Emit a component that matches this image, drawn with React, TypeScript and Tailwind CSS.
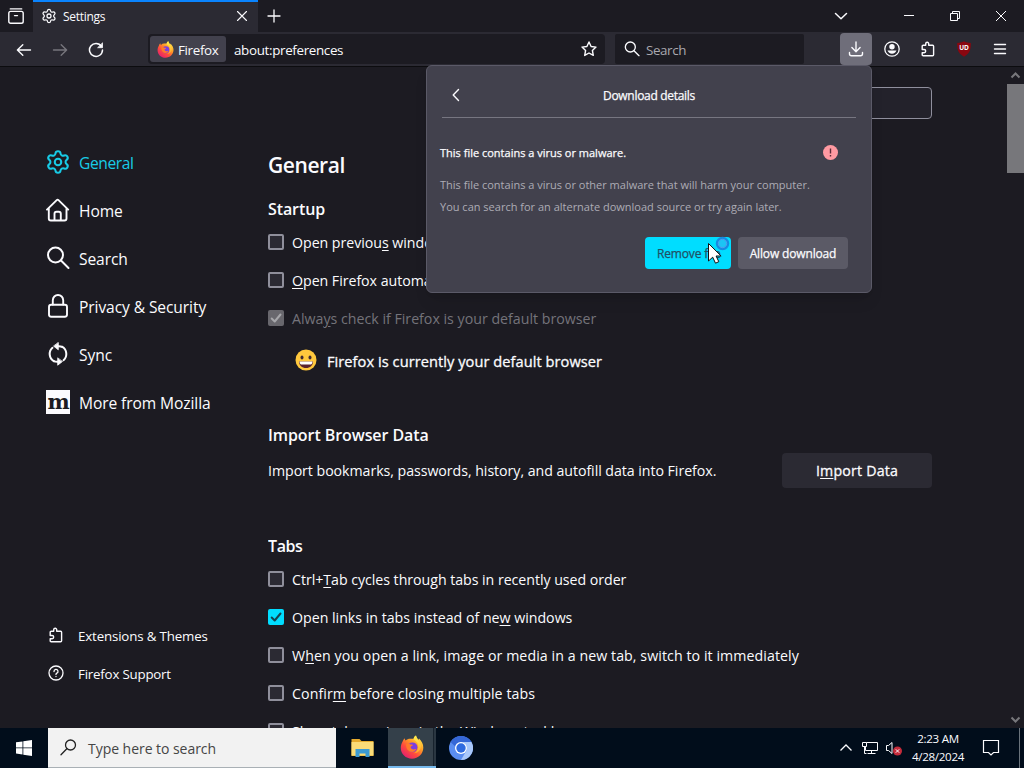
import type { ReactNode } from "react";
import { Settings } from "lucide-react";

type IconProps = { className?: string };

const stroke = {
  fill: "none",
  stroke: "currentColor",
  strokeWidth: 1.3,
  strokeLinecap: "round",
  strokeLinejoin: "round",
} as const;

function FirefoxLogo({ className }: IconProps) {
  return (
    <svg viewBox="0 0 24 24" className={className}>
      <defs>
        <linearGradient id="fx-body" x1="0.85" y1="0.1" x2="0.2" y2="0.95">
          <stop offset="0" stopColor="#ffe347" />
          <stop offset="0.35" stopColor="#ff9a25" />
          <stop offset="0.65" stopColor="#ff4b3c" />
          <stop offset="1" stopColor="#e4206f" />
        </linearGradient>
        <linearGradient id="fx-flame" x1="0.5" y1="0" x2="0.5" y2="1">
          <stop offset="0" stopColor="#fff14f" />
          <stop offset="1" stopColor="#ffa52c" />
        </linearGradient>
      </defs>
      <path
        d="M2.6 6.6C3 5.4 3.7 4.3 4.7 3.3c.1 1 .4 1.6.9 2.2C7 4.2 8.6 3.6 10.5 3.7c1-.1 2-.1 3 .2C13.7 2.4 14.6 1.1 16 .4c.4 2 1.4 3 2.8 4.4l.2-1.2c2.6 2.4 4.4 5.6 4.3 9.2C23.2 18.9 18.3 23.7 12 23.7S.8 19 .8 13c0-2.4.7-4.6 1.8-6.4z"
        fill="url(#fx-body)"
      />
      <path
        d="M16 .4c-1.6.9-2.5 2.5-2.4 4.2 2.8 1.4 4.9 4.2 4.6 7.7-.2 3-2.2 5.2-4.6 6 4.4-.2 7.4-3.2 7.4-7.3 0-4.4-4.3-6.6-5-10.6z"
        fill="url(#fx-flame)"
      />
      <circle cx="12.5" cy="12.3" r="4.9" fill="#7a3fe0" />
      <path
        d="M6.2 9.2c1.5-1 3-.6 4.3.3 1 .1 2.3 0 2.3.6-.2 1.2-1.9 1.1-2.2 2 .2 2.4 3 3 5.6 1.7-.6 2.5-3.2 3.6-5.5 3-3-.7-5-4-4.5-7.6z"
        fill="#ff7a2a"
      />
    </svg>
  );
}

function ChromiumLogo({ className }: IconProps) {
  return (
    <svg viewBox="0 0 24 24" className={className}>
      <circle cx="12" cy="12" r="12" fill="#5a8df0" />
      <path d="M1.6 6A12 12 0 0 1 22.4 6H12a6 6 0 0 0-5.8 4.5z" fill="#3567d6" />
      <path d="M12 6h10.4A12 12 0 0 1 12 24l5.2-9A6 6 0 0 0 12 6z" fill="#a9c8fb" />
      <circle cx="12" cy="12" r="6" fill="#fff" />
      <circle cx="12" cy="12" r="4.7" fill="#2f6be0" />
    </svg>
  );
}

function ExplorerIcon({ className }: IconProps) {
  return (
    <svg viewBox="0 0 22 20" className={className}>
      <path d="M0 1h8l2 2h12v15H0z" fill="#e6ab2e" />
      <path d="M0 4h22v13.5H0z" fill="#fbdc78" />
      <path d="M4 19v-8h14v8h-4v-3.5H8V19z" fill="#3d9bd3" />
    </svg>
  );
}

function PuzzleIcon({ className }: IconProps) {
  return (
    <svg viewBox="0 0 16 16" className={className} {...stroke} strokeWidth={1.4}>
      <path d="M2.2 5.3c0-.6.4-1 1-1h2.5V2.7a1.5 1.5 0 0 1 3 0v1.6h3.9c.6 0 1 .4 1 1v8.4c0 .6-.4 1-1 1H3.2c-.6 0-1-.4-1-1v-2h1.9a1.6 1.6 0 0 0 0-3.2H2.2z" />
    </svg>
  );
}

function SearchIcon({ className }: IconProps) {
  return (
    <svg viewBox="0 0 24 24" className={className} {...stroke} strokeWidth={2}>
      <circle cx="9.5" cy="9" r="7.5" />
      <path d="M15 14.5l7.5 7.5" />
    </svg>
  );
}

function HomeIcon({ className }: IconProps) {
  return (
    <svg viewBox="0 0 24 24" className={className} {...stroke} strokeWidth={1.9}>
      <path d="M1 11.6L10.7 2.1a1.3 1.3 0 0 1 1.8 0L22.2 11.6M2.8 10v10.5a2 2 0 0 0 2 2h13.7a2 2 0 0 0 2-2V10M8.5 22.3v-6.5a2 2 0 0 1 2-2h2.3a2 2 0 0 1 2 2v6.5" />
    </svg>
  );
}

function LockIcon({ className }: IconProps) {
  return (
    <svg viewBox="0 0 24 24" className={className} {...stroke} strokeWidth={1.9}>
      <rect x="3" y="10.8" width="18" height="12" rx="2.2" />
      <path d="M6.8 10.5V6.2a5.2 5.2 0 0 1 10.4 0v4.3" />
    </svg>
  );
}

function SyncIcon({ className }: IconProps) {
  return (
    <svg viewBox="0 0 24 24" className={className} {...stroke} strokeWidth={2}>
      <path d="M8 19.3A8.3 8.3 0 0 1 6.5 5.8M16 4.7a8.3 8.3 0 0 1 1.5 13.5" />
      <path d="M12.3.8v7L7.8 4.3zM11.7 16.2v7l4.5-3.5z" fill="currentColor" strokeWidth={0.8} />
      <path d="M12 4.2c1.5-.1 2.8 0 4 .6M12 19.8c-1.5.1-2.8 0-4-.6" />
    </svg>
  );
}

function MozillaIcon() {
  return (
    <span className="flex size-6 items-center justify-center bg-[#fbfbfe] font-['DejaVu_Serif',serif] text-[21px] leading-6 font-bold tracking-[-1px] text-[#1c1b22]">
      <span className="-mt-px">m</span>
    </span>
  );
}

function Key({ children }: { children: ReactNode }) {
  return <span className="underline decoration-1 underline-offset-2">{children}</span>;
}

function Tick({ className }: IconProps) {
  return (
    <svg viewBox="0 0 16 16" className={className} {...stroke} strokeWidth={2}>
      <path d="M3.7 8.5l3 3 5.8-7" />
    </svg>
  );
}

function CheckRow({
  state = "off",
  className = "",
  children,
}: {
  state?: "off" | "on" | "locked";
  className?: string;
  children: ReactNode;
}) {
  return (
    <div className={`flex h-[38px] shrink-0 items-center gap-2 ${className}`}>
      {state === "off" && (
        <span className="size-4 rounded-xs border-2 border-[#8f8f9b] bg-[#2b2a33]" />
      )}
      {state === "on" && (
        <span className="size-4 rounded-xs bg-[#00ddff]">
          <Tick className="size-4 text-[#14414f]" />
        </span>
      )}
      {state === "locked" && (
        <span className="size-4 rounded-xs bg-[#68676d]">
          <Tick className="size-4 text-[#a6a6aa]" />
        </span>
      )}
      <span className={state === "locked" ? "pt-px text-[#74737a]" : "pt-px"}>{children}</span>
    </div>
  );
}

function TabStrip() {
  return (
    <div className="flex h-8 shrink-0 bg-[#1c1b22]">
      <div className="flex w-8 items-center justify-center">
        <svg viewBox="0 0 16 16" className="size-4" {...stroke} strokeWidth={1.4}>
          <path d="M2.3.9h11.4" />
          <rect x=".8" y="3.4" width="14.4" height="11.8" rx="1.8" />
          <path d="M6.5 7.6h3" />
        </svg>
      </div>
      <div className="ml-px flex w-[225px] items-center border-t-2 border-[#0a84ff] bg-[#2b2a33] pr-2.5 pl-2">
        <Settings className="-mt-0.5 size-4" strokeWidth={1.9} />
        <span className="ml-1.5 flex-1 text-[12px] tracking-[-0.3px]">Settings</span>
        <svg viewBox="0 0 12 12" className="-mt-0.5 size-3" {...stroke} strokeWidth={1.1}>
          <path d="M1.5 1.5l9 9M10.5 1.5l-9 9" />
        </svg>
      </div>
      <div className="flex w-8 items-center justify-center">
        <svg viewBox="0 0 14 14" className="size-3.5" {...stroke}>
          <path d="M7 1v12M1 7h12" />
        </svg>
      </div>
      <div className="flex flex-1 items-center justify-end">
        <svg viewBox="0 0 14 14" className="mr-[55px] size-3.5" {...stroke} strokeWidth={1.5}>
          <path d="M1.5 4.5L7 9.7l5.5-5.2" />
        </svg>
        <svg viewBox="0 0 12 12" className="mr-[34px] size-3" fill="none" stroke="currentColor">
          <path d="M1 5.5h10" />
        </svg>
        <svg viewBox="0 0 12 12" className="mr-[34px] size-3" fill="none" stroke="currentColor">
          <path d="M1.5 3.5h7v7h-7zM3.5 3.5v-2h7v7h-2" />
        </svg>
        <svg viewBox="0 0 12 12" className="mr-[17px] size-3" fill="none" stroke="currentColor">
          <path d="M1 1l10 10M11 1L1 11" />
        </svg>
      </div>
    </div>
  );
}

function Toolbar() {
  return (
    <div className="flex h-[35px] shrink-0 items-center border-b border-[#0c0c0f] bg-[#2b2a33] text-[13.4px]">
      <svg viewBox="0 0 16 16" className="mt-px ml-4 size-4" {...stroke} strokeWidth={1.4}>
        <path d="M14.5 8h-13M6.8 2.7L1.4 8l5.4 5.3" />
      </svg>
      <svg viewBox="0 0 16 16" className="mt-px ml-5 size-4 text-[#77767d]" {...stroke} strokeWidth={1.4}>
        <path d="M1.5 8h13M9.2 2.7L14.6 8l-5.4 5.3" />
      </svg>
      <svg viewBox="0 0 16 16" className="mt-px ml-5 size-4" {...stroke} strokeWidth={1.5}>
        <path d="M13.4 4.3A6.5 6.5 0 1 0 14.5 8" />
        <path d="M14.5 1.2v4.5H10z" fill="currentColor" strokeWidth={0.8} />
      </svg>
      <div className="ml-11 flex h-[30px] w-[457px] items-center rounded-sm bg-[#1c1b22] pr-2 pl-0.5">
        <div className="flex h-[26px] w-[76px] items-center rounded-[3px] bg-[#42414d] pl-[7px]">
          <FirefoxLogo className="size-[17px]" />
          <span className="ml-1 pt-0.5 tracking-[-0.35px]">Firefox</span>
        </div>
        <span className="ml-2 flex-1 pt-0.5 tracking-[-0.34px]">about:preferences</span>
        <svg viewBox="0 0 16 16" className="size-4" {...stroke} strokeWidth={1.4}>
          <path d="M8 1l2.1 4.5 4.9.6-3.6 3.4.9 4.9L8 12l-4.3 2.4.9-4.9L1 6.1l4.900-.6z" />
        </svg>
      </div>
      <div className="ml-2.5 flex h-[30px] w-[189px] items-center rounded-xs bg-[#1c1b22] pl-[9px]">
        <SearchIcon className="size-4" />
        <span className="ml-1.5 pt-0.5 tracking-[-0.4px] text-[#a9a8af]">Search</span>
      </div>
      <div className="ml-9 flex size-8 items-center justify-center rounded-sm bg-[#6f6e7a]">
        <svg viewBox="0 0 16 16" className="size-4" {...stroke} strokeWidth={1.4}>
          <path d="M8 .9v9.5M3.9 6.6L8 10.7l4.1-4.1M1.5 11.5v1.2a2 2 0 0 0 2 2h9a2 2 0 0 0 2-2v-1.2" />
        </svg>
      </div>
      <svg viewBox="0 0 16 16" className="ml-3 size-4" {...stroke}>
        <circle cx="8" cy="8" r="7.2" />
        <circle cx="8" cy="5.8" r="2.7" fill="currentColor" stroke="none" />
        <path d="M3.5 9.5h9a4.8 4.8 0 0 1-9 0z" fill="currentColor" stroke="none" />
      </svg>
      <PuzzleIcon className="ml-5 size-4" />
      <div className="relative ml-5 size-4">
        <svg viewBox="0 0 16 16" className="size-4">
          <path d="M8 .3c2 1.2 4.4 1.7 6.8 1.7 0 6.5-.6 10-6.8 13.7C1.8 12 1.2 8.5 1.2 2 3.6 2 6 1.5 8 .3z" fill="#8a0710" />
        </svg>
        <span className="absolute inset-x-0 top-1 text-center text-[6.5px] leading-none font-bold">UD</span>
      </div>
      <svg viewBox="0 0 14 14" className="ml-[21px] size-3.5" {...stroke} strokeWidth={1.4}>
        <path d="M1.5 2.5h11M1.5 7h11M1.5 11.5h11" />
      </svg>
    </div>
  );
}

const categories = [
  { label: "General", icon: <Settings className="-mx-px size-[26px]" strokeWidth={1.9} />, active: true },
  { label: "Home", icon: <HomeIcon className="size-6" /> },
  { label: "Search", icon: <SearchIcon className="size-6" /> },
  { label: "Privacy & Security", icon: <LockIcon className="size-6" /> },
  { label: "Sync", icon: <SyncIcon className="size-6" /> },
  { label: "More from Mozilla", icon: <MozillaIcon /> },
];

function Sidebar() {
  return (
    <nav className="flex w-[268px] shrink-0 flex-col pt-[72px] pb-[35px]">
      {categories.map(({ label, icon, active }) => (
        <div
          key={label}
          className={`flex h-12 items-center gap-[9px] pl-[46px] text-[15.6px] tracking-[-0.1px] ${active ? "text-[#18cbe6]" : ""}`}
        >
          <span className="-mt-0.5">{icon}</span>
          <span className={active ? "pt-0.5 tracking-[-0.4px]" : "pt-0.5"}>{label}</span>
        </div>
      ))}
      <div className="mt-auto text-[13.3px] tracking-[-0.15px]">
        <div className="flex h-[38px] items-center gap-3.5 pl-12">
          <PuzzleIcon className="-mt-0.5 size-4" />
          <span className="pt-0.5">Extensions &amp; Themes</span>
        </div>
        <div className="flex h-[38px] items-center gap-3.5 pl-12">
          <svg viewBox="0 0 16 16" className="-mt-0.5 size-4" {...stroke}>
            <circle cx="8" cy="8" r="7" />
            <path d="M6 6.5a2 2 0 1 1 2.900 1.7c-.6.3-.9.6-.9 1.2M8 11.5v.1" />
          </svg>
          <span className="pt-0.5 tracking-[-0.2px]">Firefox Support</span>
        </div>
      </div>
    </nav>
  );
}

function Preferences() {
  return (
    <main className="flex w-[664px] shrink-0 flex-col overflow-hidden pt-5 text-[14.2px] tracking-[-0.04px]">
      <div className="h-8 w-[280px] shrink-0 self-end rounded-sm border border-[#8f8f9d] bg-[#23222b]" />
      <h1 className="mt-[27px] flex h-10 shrink-0 items-center text-[21px] font-semibold tracking-[-0.42px]">General</h1>

      <h2 className="mt-[9px] flex h-7 shrink-0 items-center text-[16px] font-semibold tracking-[-0.1px]">Startup</h2>
      <CheckRow>Open previou<Key>s</Key> windows and tabs</CheckRow>
      <CheckRow><Key>O</Key>pen Firefox automatically when your computer starts</CheckRow>
      <CheckRow state="locked" className="tracking-[0px]">
        Alwa<Key>y</Key>s check if Firefox is your default browser
      </CheckRow>
      <div className="flex h-12 shrink-0 items-center pl-[27px] text-[14.6px] tracking-[0.06px] [-webkit-text-stroke:0.3px]">
        <svg viewBox="0 0 22 22" className="-mt-0.5 size-[22px]">
          <circle cx="11" cy="11" r="10.5" fill="#ffc83d" />
          <ellipse cx="7" cy="8.5" rx="1.5" ry="2" fill="#402a32" />
          <ellipse cx="15" cy="8.5" rx="1.5" ry="2" fill="#402a32" />
          <path d="M4 12.5h14c0 4-3 6.5-7 6.500s-7-2.500-7-6.500z" fill="#59232f" />
          <path d="M4.5 12.5h13c0 1.8-.6 2.7-1.5 2.9H6c-.9-.2-1.5-1.1-1.500-2.900z" fill="#fff" />
        </svg>
        <span className="ml-2.5 pt-px">Firefox is currently your default browser</span>
      </div>

      <h2 className="mt-9 flex h-7 shrink-0 items-center text-[16px] font-semibold tracking-[-0.08px]">Import Browser Data</h2>
      <div className="mt-1 flex h-[35px] shrink-0 items-center justify-between">
        <span className="tracking-[-0.05px]">Import bookmarks, passwords, history, and autofill data into Firefox.</span>
        <button className="h-[35px] w-[150px] rounded-sm bg-[#2b2a33] tracking-[0.2px] [-webkit-text-stroke:0.3px]">
          I<Key>m</Key>port Data
        </button>
      </div>

      <h2 className="mt-11 flex h-7 shrink-0 items-center text-[16px] font-semibold tracking-[-0.4px]">Tabs</h2>
      <CheckRow>Ctrl+<Key>T</Key>ab cycles through tabs in recently used order</CheckRow>
      <CheckRow state="on" className="tracking-[-0.01px]">
        Open links in tabs instead of ne<Key>w</Key> windows
      </CheckRow>
      <CheckRow className="tracking-[0.07px]">
        W<Key>h</Key>en you open a link, image or media in a new tab, switch to it immediately
      </CheckRow>
      <CheckRow className="tracking-[0.08px]">
        Confir<Key>m</Key> before closing multiple tabs
      </CheckRow>
      <CheckRow>Show tab previews in the Windows tas<Key>k</Key>bar</CheckRow>
    </main>
  );
}

function Scrollbar() {
  return (
    <div className="ml-auto flex w-[17px] flex-col items-center justify-between text-[#77777b]">
      <div className="flex w-full flex-col">
        <svg viewBox="0 0 17 17" className="size-[17px]" fill="none" stroke="currentColor" strokeWidth={2}>
          <path d="M4.5 10.5l4-4 4 4" />
        </svg>
        <div className="h-[89px] bg-[#77777b]" />
      </div>
      <svg viewBox="0 0 17 17" className="size-[17px]" fill="none" stroke="currentColor" strokeWidth={2}>
        <path d="M4.5 6.5l4 4 4-4" />
      </svg>
    </div>
  );
}

/** Panel anchored to the downloads button, laid over the page. */
function DownloadPanel() {
  return (
    <div className="absolute top-[65px] left-[426px] flex h-[228px] w-[446px] flex-col rounded-md border border-[#5b5a68] bg-[#42414d] text-[12px] shadow-lg">
      <div className="ml-[15px] flex h-[52px] w-[414px] items-center border-b border-[#777681] pt-2">
        <svg viewBox="0 0 14 14" className="-mt-0.5 ml-[7px] size-3.5" {...stroke} strokeWidth={1.4}>
          <path d="M9.5 1.5L4.2 7l5.3 5.5" />
        </svg>
        <span className="flex-1 pt-px pr-[21px] text-center tracking-[-0.3px] [-webkit-text-stroke:0.25px]">Download details</span>
      </div>
      <div className="mt-[23px] flex h-6 items-center justify-between pr-[33px] pl-[13px] text-[11px]">
        <span className="[-webkit-text-stroke:0.25px]">This file contains a virus or malware.</span>
        <span className="-mt-0.5 flex size-[15px] items-center justify-center rounded-full bg-[#ff9aa2]">
          <svg viewBox="0 0 15 15" className="size-[15px]" stroke="#5a2a38" strokeWidth={1.4}>
            <path d="M7.5 3.5v5M7.5 10v1.5" />
          </svg>
        </span>
      </div>
      <p className="mt-[9px] pl-[13px] text-[11px] leading-[22px] text-[#adacb5]">
        This file contains a virus or other malware that will harm your computer.
        <br />
        You can search for an alternate download source or try again later.
      </p>
      <div className="mt-[19px] flex h-8 justify-end gap-[7px] pr-[23px] tracking-[-0.15px] [-webkit-text-stroke:0.25px]">
        <button className="w-[86px] rounded-sm bg-[#00ddff] pt-0.5 pl-3 text-left text-[#205064]">Remove file</button>
        <button className="w-[110px] rounded-sm bg-[#5b5a66] pt-0.5">Allow download</button>
      </div>
      <svg viewBox="0 0 28 32" className="absolute top-[168px] left-[280px] h-8 w-7">
        <circle cx="15.5" cy="9.5" r="5.5" fill="#1cc4f4" stroke="#168be0" strokeWidth="2.5" />
        <circle cx="15.5" cy="9.5" r="4.2" fill="none" stroke="#4f9cf0" strokeWidth="1" />
        <path d="M1.5 9.5v17.500l4.2-3.8 2.8 6 3.3-1.5-2.7-5.700h5z" fill="#fff" stroke="#111" strokeWidth="1" />
      </svg>
    </div>
  );
}

function Taskbar() {
  return (
    <div className="flex h-10 shrink-0 items-center bg-[#010d1b]">
      <div className="flex w-12 justify-center">
        <svg viewBox="0 0 16 16" className="size-4" fill="#fff">
          <path d="M0 2.3l6.5-.9v6.1H0zM7.3 1.3L16 0v7.500H7.3zM0 8.3h6.5v6.2L0 13.6zM7.3 8.3H16V16l-8.700-1.300z" />
        </svg>
      </div>
      <div className="flex h-10 w-72 items-center border-b border-[#a9b0b5] bg-[#f2f2f2] pl-3 text-[14px] tracking-[-0.04px] text-[#454545]">
        <svg viewBox="0 0 17 17" className="size-[17px]" {...stroke} stroke="#222">
          <circle cx="10.5" cy="6" r="5" />
          <path d="M6.8 9.8L1 15.8" />
        </svg>
        <span className="ml-[11px] pt-0.5">Type here to search</span>
      </div>
      <ExplorerIcon className="ml-[15px] h-5 w-[23px]" />
      <div className="ml-3.5 flex h-10 w-12 border-b-2 border-[#76b9ed] bg-[#34404a]">
        <div className="flex w-[45px] items-center justify-center pl-0.5">
          <FirefoxLogo className="size-6" />
        </div>
        <div className="flex-1 border-l border-[#17222d] bg-[#2a3641]" />
      </div>
      <ChromiumLogo className="ml-[13px] size-6" />
      <div className="ml-auto flex items-center">
        <svg viewBox="0 0 14 14" className="size-3.5" fill="none" stroke="currentColor" strokeWidth={1.3}>
          <path d="M1.5 9.500L7 4l5.5 5.500" />
        </svg>
        <svg viewBox="0 0 18 16" className="ml-2 h-4 w-[18px]" fill="none" stroke="currentColor">
          <path d="M5.5 2.5h11v8h-12v-4M10.5 10.5v3M6.5 13.5h8M1.5 2.5h4v4h-4zM3.5 6.5v7h2" />
        </svg>
        <svg viewBox="0 0 18 16" className="ml-1.5 h-4 w-[18px]" fill="none" stroke="currentColor">
          <path d="M1.5 5.5h2l3.5-3v11l-3.5-3h-2z" />
          <circle cx="12.5" cy="11" r="4.5" fill="#c52b3b" stroke="none" />
          <path d="M10.8 9.3l3.4 3.4M14.2 9.3l-3.4 3.4" />
        </svg>
        <div className="ml-2 w-[54px] text-center text-[11.6px] leading-[18px] tracking-[-0.3px] whitespace-nowrap">
          2:23 AM
          <br />
          4/28/2024
        </div>
        <svg viewBox="0 0 18 18" className="ml-[17px] size-[18px]" fill="none" stroke="currentColor" strokeWidth={1.2}>
          <path d="M1.5 1.5h15v12h-5L9 16l-2.500-2.500h-5z" />
        </svg>
        <div className="ml-[19px] h-10 w-px bg-[#6a737c]" />
        <div className="w-1" />
      </div>
    </div>
  );
}

export default function App() {
  return (
    <div className="relative flex h-[768px] w-[1024px] flex-col overflow-hidden bg-[#1c1b22] font-['Open_Sans','Noto_Sans',sans-serif] text-[#fbfbfe]">
      <TabStrip />
      <Toolbar />
      <div className="flex min-h-0 flex-1 overflow-hidden">
        <Sidebar />
        <Preferences />
        <Scrollbar />
      </div>
      <Taskbar />
      <DownloadPanel />
    </div>
  );
}
